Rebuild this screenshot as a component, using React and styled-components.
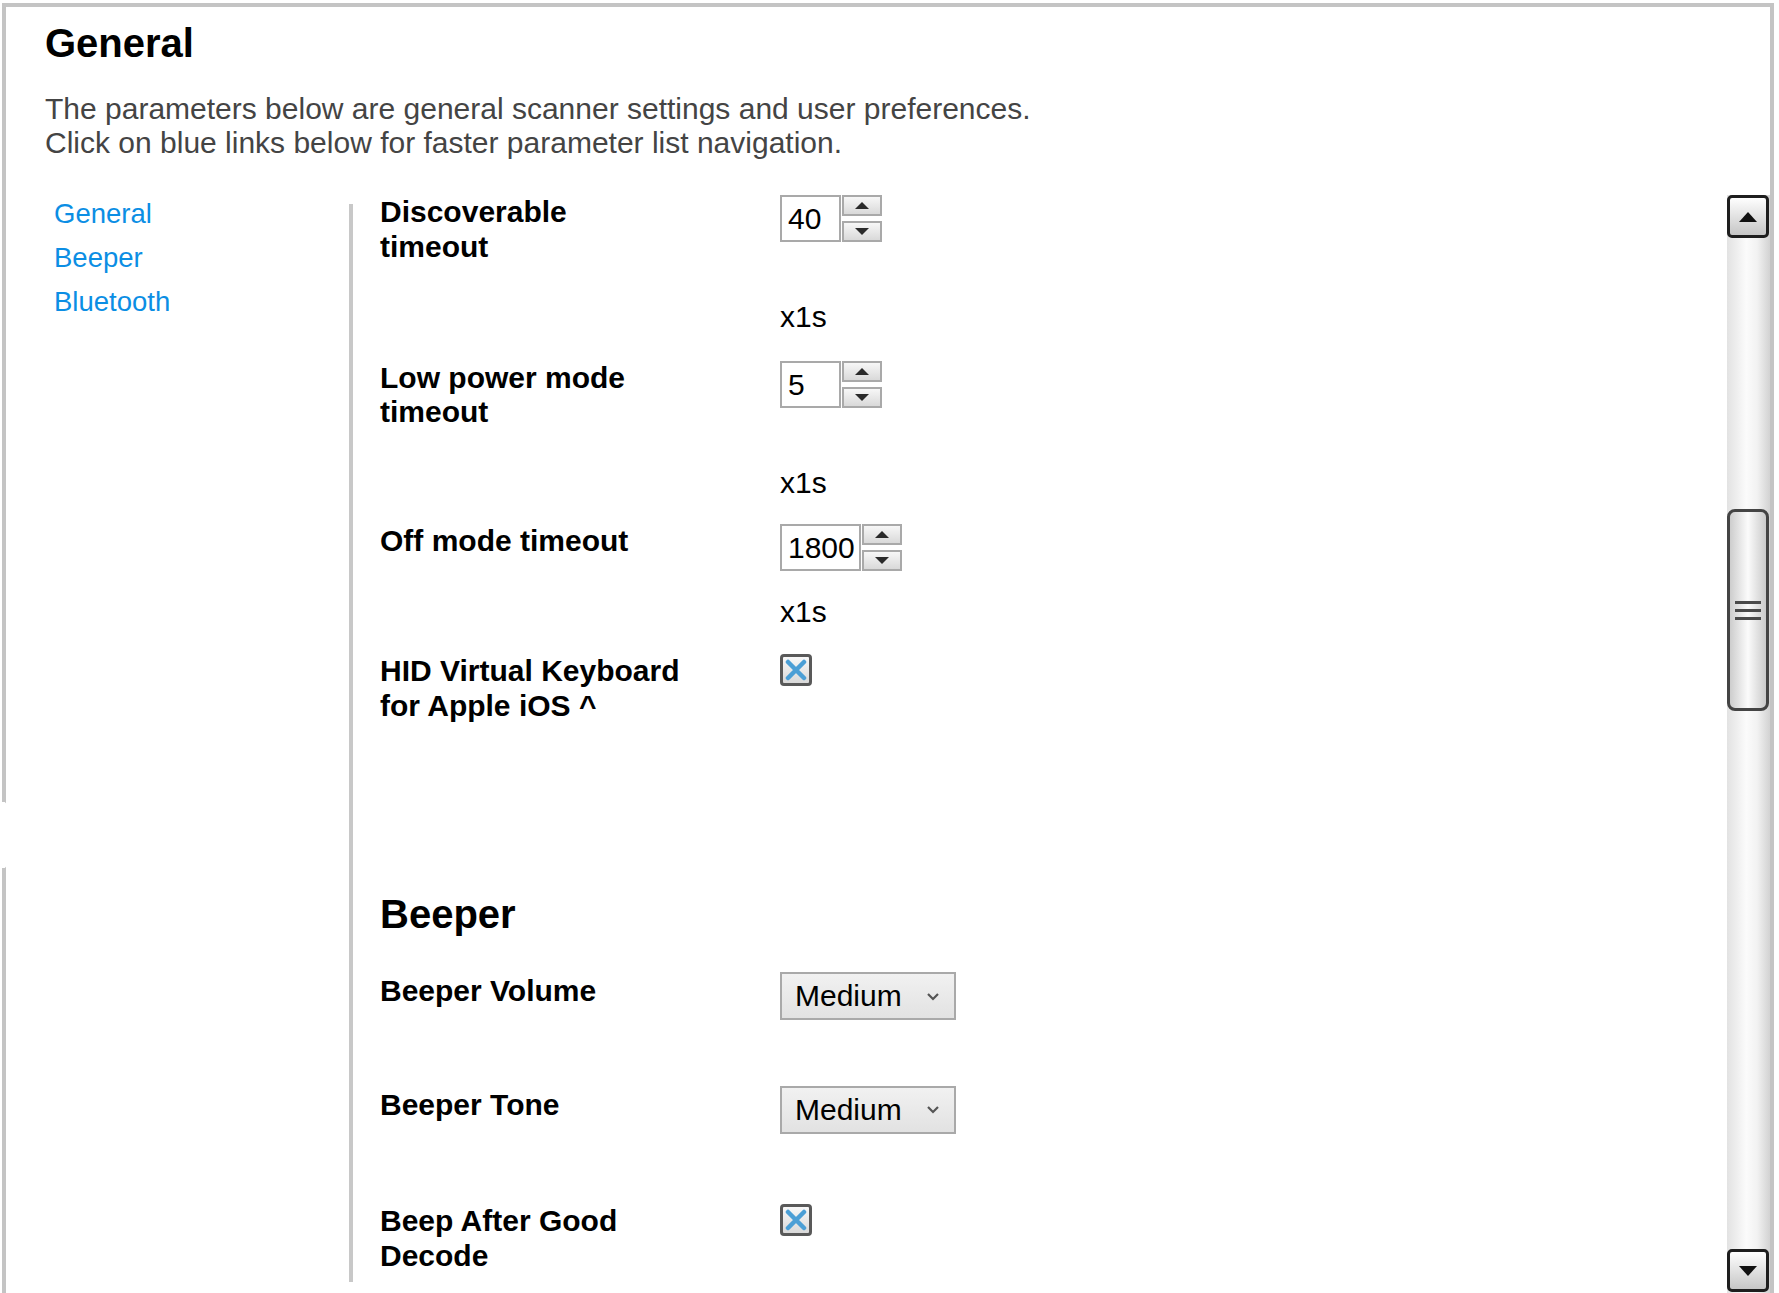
import styled, { createGlobalStyle } from 'styled-components';

const GlobalStyle = createGlobalStyle`
  html, body {
    margin: 0;
    padding: 0;
    background: #fff;
    overflow: hidden;
  }
  body {
    font-family: "Liberation Sans", Arial, sans-serif;
    color: #000;
  }
`;

const Panel = styled.div`
  position: relative;
  margin: 3px 0 0 2px;
  width: 1772px;
  height: 1290px;
  box-sizing: border-box;
  border: 4px solid #c4c4c4;
  border-bottom: none;
  display: flex;
  flex-direction: column;
`;

// the gap in the left frame edge, as seen in the capture
const EdgeNotch = styled.div`
  position: absolute;
  left: -6px;
  top: 795px;
  width: 12px;
  height: 66px;
  background: #fff;
  clip-path: polygon(0 0, 40% 0, 100% 12%, 100% 88%, 40% 100%, 0 100%);
`;

const Header = styled.div`
  padding: 13px 0 0 39px;
`;

const Title = styled.h1`
  margin: 0;
  font-size: 40px;
  line-height: 46px;
  font-weight: 700;
`;

const Intro = styled.p`
  margin: 26px 0 0;
  font-size: 30px;
  line-height: 34px;
  color: #444;
`;

const Body = styled.div`
  flex: 1;
  min-height: 0;
  margin-top: 35px;
  display: flex;
`;

const Nav = styled.nav`
  width: 295px;
  padding: 3px 0 0 48px;
  display: flex;
  flex-direction: column;
  gap: 13px;
`;

const NavLink = styled.a`
  font-size: 27.5px;
  line-height: 31px;
  color: #0b8ee4;
  text-decoration: none;
`;

const Divider = styled.div`
  width: 4px;
  margin: 9px 0 11px;
  background: #c8c8c8;
`;

const Params = styled.div`
  flex: 1;
  padding-left: 27px;
  overflow: hidden;
`;

const Param = styled.div`
  display: grid;
  grid-template-columns: 400px 1fr;
  row-gap: 36px;
  margin-bottom: ${(p) => p.$after}px;
`;

const Label = styled.div`
  font-size: 30px;
  line-height: 34.5px;
  font-weight: 700;
  white-space: pre-line;
`;

const Control = styled.div`
  height: 34px;
  overflow: visible;
`;

const Unit = styled.div`
  grid-column: 2;
  font-size: 30px;
  line-height: 34.5px;
`;

const SectionTitle = styled.h2`
  margin: 0 0 37px;
  font-size: 40px;
  line-height: 46px;
  font-weight: 700;
`;

const NumberWrap = styled.div`
  display: flex;
  gap: 1px;
`;

const NumberBox = styled.div`
  width: ${(p) => p.$w}px;
  height: 47px;
  box-sizing: border-box;
  border: 2px solid #a9a9a9;
  padding-left: 6px;
  font-size: 30px;
  line-height: 43px;
`;

const Spinner = styled.div`
  width: 40px;
  display: flex;
  flex-direction: column;
  justify-content: space-between;
`;

const SpinBtn = styled.div`
  height: 21px;
  box-sizing: border-box;
  border: 2px solid #a9a9a9;
  background: linear-gradient(#f7f7f7, #d9d9d9);
  display: flex;
  align-items: center;
  justify-content: center;
`;

const Arrow = styled.span`
  width: 0;
  height: 0;
  border-left: 7px solid transparent;
  border-right: 7px solid transparent;
  ${(p) => (p.$down ? 'border-top: 7px solid #2a2a2a;' : 'border-bottom: 7px solid #2a2a2a;')}
`;

const Check = styled.div`
  width: 32px;
  height: 32px;
  box-sizing: border-box;
  border: 3px solid #595959;
  border-radius: 4px;
  background: linear-gradient(#f8f8f8, #d9d9d9);
  display: flex;
  align-items: center;
  justify-content: center;
`;

const Select = styled.div`
  width: 176px;
  height: 48px;
  margin-top: -2px;
  box-sizing: border-box;
  border: 2px solid #a9a9a9;
  background: linear-gradient(#f1f1f1, #e2e2e2);
  display: flex;
  align-items: center;
  justify-content: space-between;
  padding: 0 14px 0 13px;
  font-size: 30px;
`;

const ScrollBar = styled.div`
  width: 43px;
  display: flex;
  flex-direction: column;
  background: linear-gradient(to right, #e2e2e2, #fbfbfb 45%, #f2f2f2 70%, #d2d2d2);
`;

const ScrollBtn = styled.div`
  width: 42px;
  height: 43px;
  box-sizing: border-box;
  border: 3px solid #1e1e1e;
  border-radius: 5px;
  background: linear-gradient(#fefefe, #c6c6c6);
  display: flex;
  align-items: center;
  justify-content: center;
  margin-top: ${(p) => (p.$bottom ? 'auto' : '0')};
  margin-bottom: ${(p) => (p.$bottom ? '1px' : '0')};
`;

const BigArrow = styled.span`
  width: 0;
  height: 0;
  border-left: 9px solid transparent;
  border-right: 9px solid transparent;
  ${(p) => (p.$down ? 'border-top: 10px solid #111;' : 'border-bottom: 10px solid #111;')}
`;

const Thumb = styled.div`
  width: 42px;
  height: 202px;
  margin-top: 271px;
  box-sizing: border-box;
  border: 3px solid #444;
  border-radius: 8px;
  background: linear-gradient(to right, #cdcdcd, #fbfbfb 50%, #cacaca);
  display: flex;
  flex-direction: column;
  align-items: center;
  justify-content: center;
  gap: 5px;
`;

const Grip = styled.span`
  width: 26px;
  height: 3px;
  background: #4a4a4a;
`;

function NumberInput({ value, width }) {
  return (
    <NumberWrap>
      <NumberBox $w={width}>{value}</NumberBox>
      <Spinner>
        <SpinBtn><Arrow /></SpinBtn>
        <SpinBtn><Arrow $down /></SpinBtn>
      </Spinner>
    </NumberWrap>
  );
}

function Checkbox() {
  return (
    <Check>
      <svg width="22" height="22" viewBox="0 0 22 22">
        <path d="M3 3 L19 19 M19 3 L3 19" stroke="#4b9fd6" strokeWidth="4.5" strokeLinecap="round" />
      </svg>
    </Check>
  );
}

function Dropdown({ value }) {
  return (
    <Select>
      <span>{value}</span>
      <svg width="14" height="9" viewBox="0 0 14 9">
        <path d="M2 2 L7 7 L12 2" stroke="#555" strokeWidth="2.2" fill="none" />
      </svg>
    </Select>
  );
}

export default function App() {
  return (
    <>
      <GlobalStyle />
      <Panel>
        <EdgeNotch />
        <Header>
          <Title>General</Title>
          <Intro>
            The parameters below are general scanner settings and user preferences.
            <br />
            Click on blue links below for faster parameter list navigation.
          </Intro>
        </Header>
        <Body>
          <Nav>
            <NavLink href="#general">General</NavLink>
            <NavLink href="#beeper">Beeper</NavLink>
            <NavLink href="#bluetooth">Bluetooth</NavLink>
          </Nav>
          <Divider />
          <Params>
            <Param $after={26}>
              <Label>{'Discoverable\ntimeout'}</Label>
              <Control><NumberInput value="40" width={61} /></Control>
              <Unit>x1s</Unit>
            </Param>
            <Param $after={24}>
              <Label>{'Low power mode\ntimeout'}</Label>
              <Control><NumberInput value="5" width={61} /></Control>
              <Unit>x1s</Unit>
            </Param>
            <Param $after={25}>
              <Label>Off mode timeout</Label>
              <Control><NumberInput value="1800" width={81} /></Control>
              <Unit>x1s</Unit>
            </Param>
            <Param $after={168}>
              <Label>{'HID Virtual Keyboard\nfor Apple iOS ^'}</Label>
              <Control><Checkbox /></Control>
            </Param>
            <SectionTitle id="beeper">Beeper</SectionTitle>
            <Param $after={79}>
              <Label>Beeper Volume</Label>
              <Control><Dropdown value="Medium" /></Control>
            </Param>
            <Param $after={82}>
              <Label>Beeper Tone</Label>
              <Control><Dropdown value="Medium" /></Control>
            </Param>
            <Param $after={0}>
              <Label>{'Beep After Good\nDecode'}</Label>
              <Control><Checkbox /></Control>
            </Param>
          </Params>
          <ScrollBar>
            <ScrollBtn><BigArrow /></ScrollBtn>
            <Thumb><Grip /><Grip /><Grip /></Thumb>
            <ScrollBtn $bottom><BigArrow $down /></ScrollBtn>
          </ScrollBar>
        </Body>
      </Panel>
    </>
  );
}
